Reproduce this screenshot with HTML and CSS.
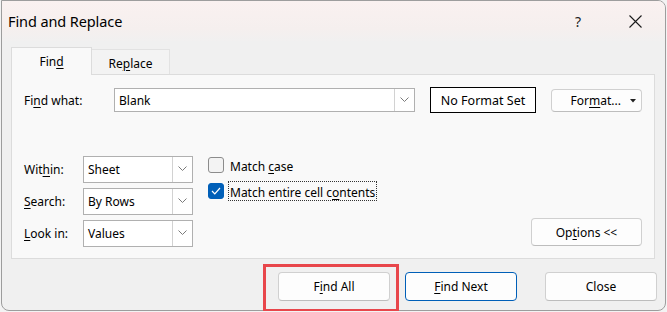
FILE: index.html
```html
<!DOCTYPE html>
<html>
<head>
<meta charset="utf-8">
<link rel="stylesheet" href="styles.css">
</head>
<body>
<div class="window">
  <div class="titlebar">
    <span class="title">Find and Replace</span>
    <span class="help">?</span>
    <span class="close"><svg width="13" height="13" viewBox="0 0 13 13"><path d="M0.5 0.5 L12.5 12.5 M12.5 0.5 L0.5 12.5" stroke="#1a1a1a" stroke-width="1.1" fill="none"/></svg></span>
  </div>
  <div class="content">
    <div class="tabs">
      <div class="tab active">Fin<u>d</u></div>
      <div class="tab">Re<u>p</u>lace</div>
    </div>
    <div class="panel">
      <div class="row-find">
        <span class="lbl-find">Fi<u>n</u>d what:</span>
        <div class="combo combo-find"><span class="combo-text">Blank</span><span class="combo-btn"><svg width="9" height="5" viewBox="0 0 9 5"><path d="M0.5 0.5 L4.5 4.5 L8.5 0.5" stroke="#7a7a7a" stroke-width="1" fill="none"/></svg></span></div>
        <div class="noformat">No Format Set</div>
        <div class="btn btn-format"><span>For<u>m</u>at...</span><svg class="caret" width="6" height="4" viewBox="0 0 6 4"><path d="M0 0 H6 L3 3.5 Z" fill="#222"/></svg></div>
      </div>
      <div class="options">
        <div class="selects">
          <span class="lbl">Wit<u>h</u>in:</span>
          <div class="combo"><span class="combo-text">Sheet</span><span class="combo-btn"><svg width="9" height="5" viewBox="0 0 9 5"><path d="M0.5 0.5 L4.5 4.5 L8.5 0.5" stroke="#7a7a7a" stroke-width="1" fill="none"/></svg></span></div>
          <span class="lbl"><u>S</u>earch:</span>
          <div class="combo"><span class="combo-text">By Rows</span><span class="combo-btn"><svg width="9" height="5" viewBox="0 0 9 5"><path d="M0.5 0.5 L4.5 4.5 L8.5 0.5" stroke="#7a7a7a" stroke-width="1" fill="none"/></svg></span></div>
          <span class="lbl"><u>L</u>ook in:</span>
          <div class="combo"><span class="combo-text">Values</span><span class="combo-btn"><svg width="9" height="5" viewBox="0 0 9 5"><path d="M0.5 0.5 L4.5 4.5 L8.5 0.5" stroke="#7a7a7a" stroke-width="1" fill="none"/></svg></span></div>
        </div>
        <div class="checks">
          <div class="check"><span class="box"></span><span class="check-text">Match <u>c</u>ase</span></div>
          <div class="check"><span class="box checked"><svg width="10" height="8" viewBox="0 0 10 8"><path d="M1 4 L3.8 6.8 L9 1" stroke="#fff" stroke-width="1.2" fill="none"/></svg></span><span class="check-text focus">Match entire cell c<u>o</u>ntents</span></div>
        </div>
        <div class="btn btn-options">Op<u>t</u>ions &lt;&lt;</div>
      </div>
    </div>
    <div class="footer">
      <div class="highlight"><div class="btn btn-foot">F<u>i</u>nd All</div></div>
      <div class="btn btn-foot default"><u>F</u>ind Next</div>
      <div class="btn btn-foot close-btn">Close</div>
    </div>
  </div>
</div>
</body>
</html>
```

FILE: styles.css
```css
html, body {
  margin: 0;
  padding: 0;
  background: #f3f3f3;
}
body {
  font-family: "Noto Sans", "Open Sans", sans-serif;
  font-size: 12px;
  color: #000;
}
u {
  text-decoration-thickness: 1px;
  text-underline-offset: 2px;
}
.window {
  margin-left: 1px;
  width: 665px;
  height: 311px;
  box-sizing: border-box;
  border: 1px solid #9d9d9d;
  border-radius: 0 8px 8px 8px;
  background: #f0f0f0;
  display: flex;
  flex-direction: column;
}
.titlebar {
  height: 40px;
  display: flex;
  align-items: center;
  padding: 0 7px 0 6px;
  background: linear-gradient(#faf1f0, #f5efee 70%, #f1f0f0);
  border-radius: 0 7px 0 0;
}
.title {
  flex: 1;
  font-size: 14.5px;
  letter-spacing: -0.1px;
}
.help {
  width: 46px;
  text-align: center;
  margin-right: 11px;
  font-size: 14px;
  color: #222;
}
.close {
  width: 46px;
  height: 30px;
  display: flex;
  align-items: center;
  justify-content: center;
}
.content {
  flex: 1;
  padding: 0 8px 0 0;
  display: flex;
  flex-direction: column;
}
.tabs {
  margin: 6px 0 0 9px;
  height: 27px;
  display: flex;
  align-items: flex-end;
  position: relative;
  z-index: 1;
}
.tab {
  box-sizing: border-box;
  display: flex;
  align-items: center;
  justify-content: center;
}
.tab.active {
  width: 81px;
  height: 28px;
  margin-bottom: -1px;
  background: #f9f9f9;
  border: 1px solid #dcdcdc;
  border-bottom: none;
}
.tab:not(.active) {
  width: 78px;
  height: 25px;
  background: #f3f3f3;
  border-top: 1px solid #e2e2e2;
  border-right: 1px solid #e2e2e2;
  padding-top: 2px;
}
.panel {
  margin-left: 9px;
  width: 644px;
  height: 185px;
  box-sizing: border-box;
  border: 1px solid #dcdcdc;
  background: #f9f9f9;
  padding: 12px 12px 0 12px;
}
.row-find {
  display: flex;
  align-items: center;
  height: 26px;
}
.lbl-find {
  width: 90px;
}
.combo {
  box-sizing: border-box;
  height: 27px;
  border: 1px solid #b0b0b0;
  background: #fff;
  display: flex;
  align-items: stretch;
}
.combo-find {
  width: 301px;
  height: 24px;
}
.combo-text {
  flex: 1;
  display: flex;
  align-items: center;
  padding-left: 4px;
}
.combo-btn {
  width: 20px;
  border-left: 1px solid #d2d2d2;
  display: flex;
  align-items: center;
  justify-content: center;
  padding-bottom: 2px;
  box-sizing: border-box;
}
.noformat {
  margin-left: 15px;
  width: 106px;
  height: 26px;
  box-sizing: border-box;
  border: 1px solid #000;
  background: #fff;
  display: flex;
  align-items: center;
  justify-content: center;
  font-size: 12.5px;
}
.btn {
  box-sizing: border-box;
  border: 1px solid #d0d0d0;
  border-bottom-color: #bdbdbd;
  border-radius: 4px;
  background: #fdfdfd;
  display: flex;
  align-items: center;
  justify-content: center;
}
.btn-format {
  margin-left: 15px;
  width: 91px;
  height: 23px;
  justify-content: flex-end;
  padding-right: 5px;
  gap: 9px;
}
.caret {
  margin-top: 1px;
}
.options {
  margin-top: 43px;
  display: flex;
  align-items: flex-start;
}
.selects {
  display: grid;
  grid-template-columns: 59px 110px;
  grid-auto-rows: 27px;
  row-gap: 5px;
  align-items: center;
}
.selects .combo {
  height: 27px;
}
.checks {
  margin-left: 15px;
  margin-top: -1px;
  display: flex;
  flex-direction: column;
  gap: 6px;
}
.check {
  height: 20px;
  display: flex;
  align-items: center;
}
.box {
  width: 16px;
  height: 16px;
  box-sizing: border-box;
  border: 1px solid #8c8c8c;
  border-radius: 3px;
  background: #f3f3f3;
  display: flex;
  align-items: center;
  justify-content: center;
}
.box.checked {
  background: #005fb8;
  border-color: #005fb8;
}
.check-text {
  margin-left: 5px;
  padding: 2px 1px 0;
  height: 20px;
  box-sizing: border-box;
  display: flex;
  align-items: center;
  white-space: pre;
}
.check-text.focus {
  margin-left: 4px;
  border: 1px dotted #333;
}
.btn-options {
  margin-left: auto;
  margin-top: 62px;
  width: 111px;
  height: 28px;
}
.footer {
  margin-top: 13px;
  display: flex;
  justify-content: flex-end;
}
.btn-foot {
  width: 112px;
  height: 29px;
}
.highlight {
  position: relative;
  margin-right: 15px;
}
.highlight::after {
  content: "";
  position: absolute;
  left: -15px;
  top: -8px;
  right: -9px;
  bottom: -11px;
  border: 3px solid #e8464b;
}
.btn-foot.default {
  border: 1px solid #005fb8;
}
.close-btn {
  margin-left: 28px;
}
```
